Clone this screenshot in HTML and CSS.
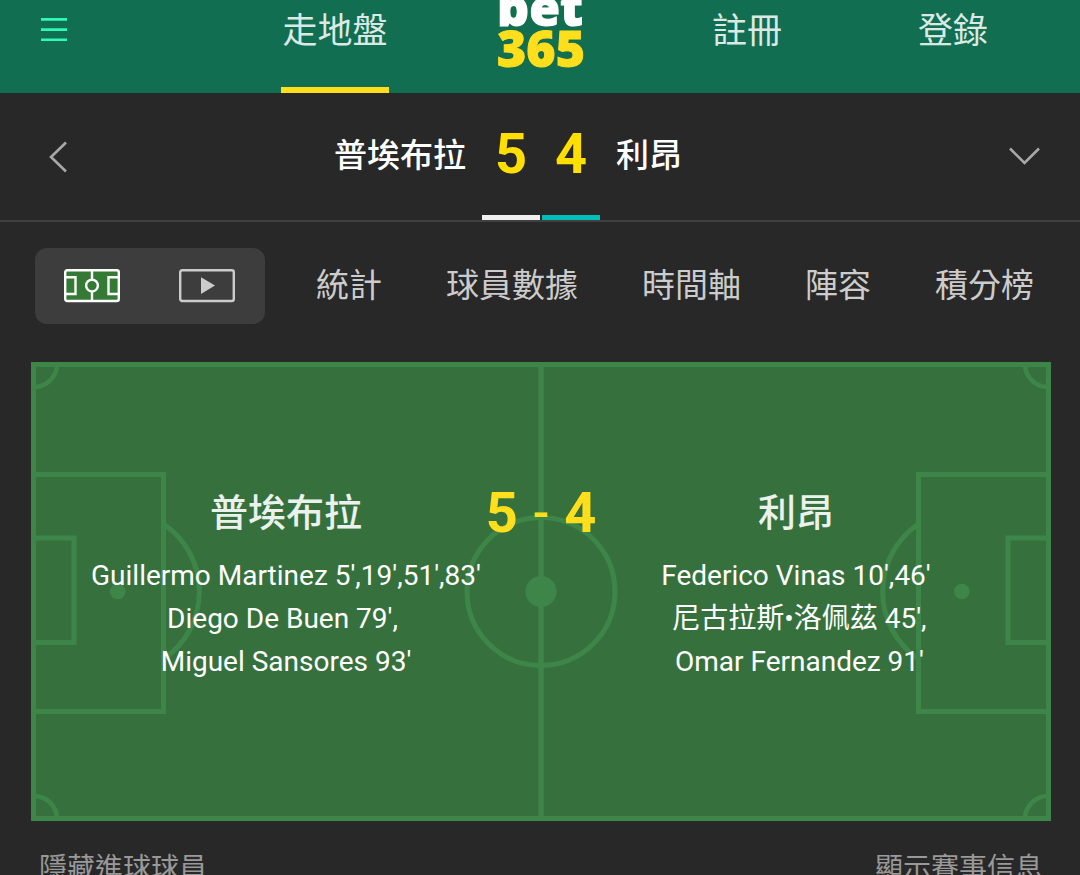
FILE: index.html
```html
<!DOCTYPE html>
<html lang="zh-Hant">
<head>
<meta charset="utf-8">
<meta name="viewport" content="width=device-width, initial-scale=1">
<title>bet365</title>
<link rel="stylesheet" href="styles.css">
</head>
<body>
<header class="top-bar">
  <button class="menu-button" type="button" aria-label="選單">
    <svg width="26" height="24" viewBox="0 0 26 24" aria-hidden="true"><path d="M0 1.4H26M0 11.6H26M0 21.7H26" stroke="#2ffab4" stroke-width="2.6"/></svg>
  </button>
  <a class="top-link top-link-active" href="#inplay">走地盤</a>
  <a class="logo" href="#home"><span class="logo-bet">bet</span><span class="logo-num">365</span></a>
  <a class="top-link" href="#join">註冊</a>
  <a class="top-link" href="#login">登錄</a>
</header>

<section class="match-bar">
  <button class="icon-button" type="button" aria-label="返回">
    <svg width="20" height="32" viewBox="0 0 20 32" aria-hidden="true"><path d="M18 1.5L3 16L18 30.5" fill="none" stroke="#a8a8a8" stroke-width="2.6"/></svg>
  </button>
  <div class="match-title">
    <span class="match-team match-team-home">普埃布拉</span>
    <span class="match-score match-score-home">5</span>
    <span class="match-score match-score-away">4</span>
    <span class="match-team">利昂</span>
  </div>
  <button class="icon-button icon-button-end" type="button" aria-label="更多賽事">
    <svg width="32" height="20" viewBox="0 0 32 20" aria-hidden="true"><path d="M1 1.5L15.500 16L30 1.5" fill="none" stroke="#a8a8a8" stroke-width="2.6"/></svg>
  </button>
</section>

<nav class="tabs">
  <div class="view-switch">
    <button class="view-button" type="button" aria-label="球場">
      <svg width="56" height="34" viewBox="0 0 56 34" aria-hidden="true">
        <rect x="1.200" y="1.200" width="53.600" height="30.800" rx="2" fill="#347a35" stroke="#fff" stroke-width="2.400"/>
        <path d="M28 2V11M28 23V32M2 8.200H11.500V25H2M54 8.200H44.500V25H54" fill="none" stroke="#fff" stroke-width="2.400"/>
        <circle cx="28" cy="16.600" r="5.900" fill="none" stroke="#fff" stroke-width="2.400"/>
      </svg>
    </button>
    <button class="view-button" type="button" aria-label="視頻">
      <svg width="56" height="34" viewBox="0 0 56 34" aria-hidden="true">
        <rect x="1.200" y="1.200" width="53.600" height="30.800" rx="2" fill="none" stroke="#ccc" stroke-width="2.400"/>
        <path d="M22 8.200L36 16.600L22 25Z" fill="#ccc"/>
      </svg>
    </button>
  </div>
  <div class="tab-list">
    <a class="tab" href="#stats">統計</a>
    <a class="tab" href="#players">球員數據</a>
    <a class="tab" href="#timeline">時間軸</a>
    <a class="tab" href="#lineup">陣容</a>
    <a class="tab" href="#table">積分榜</a>
  </div>
</nav>

<main class="pitch">
  <svg class="pitch-lines" viewBox="0 0 1020 459" aria-hidden="true">
    <g fill="none" stroke="#3e8549" stroke-width="5">
      <rect x="2.500" y="2.500" width="1015" height="454"/>
      <path d="M510 0V459" stroke-width="5.500"/>
      <circle cx="510" cy="229.500" r="74"/>
      <path d="M0 112.500H132.500V349.500H0M0 176H43V280.500H0"/>
      <path d="M134 163A81.500 81.500 0 0 1 134 296"/>
      <path d="M1020 112.500H887.500V349.500H1020M1020 176H977V280.500H1020"/>
      <path d="M886 163A81.500 81.500 0 0 0 886 296"/>
      <path d="M26 3A23 23 0 0 1 3 25M994 3A23 23 0 0 0 1017 25M3 434A23 23 0 0 1 26 456M1017 434A23 23 0 0 0 994 456" stroke-width="4.600"/>
    </g>
    <g fill="#3e8549">
      <circle cx="510" cy="229.500" r="15.500"/>
      <circle cx="86.700" cy="229.500" r="7.800"/>
      <circle cx="930.800" cy="229.500" r="7.800"/>
    </g>
  </svg>
  <div class="summary">
    <h2 class="summary-team summary-home">普埃布拉</h2>
    <h2 class="summary-team summary-away">利昂</h2>
    <p class="summary-score"><span>5</span><span class="summary-dash">-</span><span>4</span></p>
    <ul class="scorers">
      <li>Guillermo Martinez 5',19',51',83'</li>
      <li>Diego De Buen 79',&nbsp;</li>
      <li>Miguel Sansores 93'</li>
    </ul>
    <ul class="scorers">
      <li>Federico Vinas 10',46'</li>
      <li>&nbsp;尼古拉斯•洛佩茲 45',</li>
      <li>&nbsp;Omar Fernandez 91'</li>
    </ul>
  </div>
</main>

<footer class="pitch-actions">
  <button class="text-button" type="button">隱藏進球球員</button>
  <button class="text-button" type="button">顯示賽事信息</button>
</footer>
</body>
</html>
```
FILE: styles.css
```css
* {
  box-sizing: border-box;
}

body {
  height: 100vh;
  margin: 0;
  overflow: hidden;
  background: #282828;
  color: #fff;
  font-family: Roboto, "Noto Sans CJK TC", sans-serif;
}

button {
  padding: 0;
  border: 0;
  background: none;
  color: inherit;
  font: inherit;
}

a {
  color: inherit;
  text-decoration: none;
}

svg {
  display: block;
}

.top-bar {
  display: grid;
  grid-template-columns: repeat(5, 1fr);
  justify-items: center;
  height: 93px;
  padding: 0 24px 0 26px;
  overflow: hidden;
  background: #126e51;
}

.menu-button {
  justify-self: start;
  align-self: start;
  padding: 18px 15px;
}

.top-link {
  height: 93px;
  padding: 12px 1px 0;
  border-bottom: 6px solid transparent;
  color: #dbe9e4;
  font-size: 35px;
  line-height: 40px;
}

.top-link-active {
  border-color: #ffdf1b;
}

.logo {
  display: flex;
  flex-direction: column;
  margin-top: -13px;
  font-family: "Open Sans", "Noto Sans", sans-serif;
  font-size: 50px;
  font-weight: 800;
  line-height: 41px;
  -webkit-text-stroke: 1px currentColor;
}

.logo-num {
  color: #ffdf1b;
}

.match-bar {
  display: grid;
  grid-template-columns: 80px 1fr 80px;
  align-items: center;
  height: 129px;
  padding: 0 0 0 2px;
  border-bottom: 2px solid #404040;
}

.icon-button {
  display: flex;
  padding-left: 46px;
}

.icon-button-end {
  justify-content: flex-end;
  padding: 0 39px 0 0;
}

.match-title {
  display: grid;
  grid-template-columns: 1fr 58px 58px 1fr;
  column-gap: 2px;
  height: 127px;
  font-size: 33px;
  font-weight: 500;
  line-height: 122px;
}

.match-team {
  padding: 2px 14px 0;
}

.match-team-home {
  text-align: right;
}

.match-score {
  border-bottom: 5px solid #f0f0f0;
  color: #ffdf00;
  font-size: 56px;
  font-weight: 700;
  text-align: center;
}

.match-score-away {
  border-color: #00c0b5;
}

.tabs {
  display: flex;
  align-items: center;
  gap: 51px;
  padding: 26px 46px 38px 35px;
}

.view-switch {
  display: flex;
  flex: 0 0 230px;
  height: 76px;
  padding-right: 1px;
  border-radius: 12px;
  background: #3d3d3d;
}

.view-button {
  display: flex;
  flex: 1;
  align-items: center;
  justify-content: center;
}

.tab-list {
  display: flex;
  flex: 1;
  justify-content: space-between;
  color: #ccc;
  font-size: 33px;
  line-height: 40px;
  white-space: nowrap;
}

.pitch {
  display: grid;
  margin: 0 29px 0 31px;
  background: #36713d;
}

.pitch-lines {
  grid-area: 1 / 1;
  width: 100%;
}

.summary {
  display: grid;
  grid-area: 1 / 1;
  grid-template-columns: 1fr 1fr;
  align-content: start;
  align-items: center;
  padding-top: 120px;
  text-align: center;
}

.summary-team {
  grid-row: 1;
  margin: 0;
  color: #ebf1ec;
  font-size: 38px;
  font-weight: 500;
  line-height: 60px;
}

.summary-home {
  grid-column: 1;
}

.summary-away {
  grid-column: 2;
}

.summary-score {
  display: flex;
  grid-row: 1;
  grid-column: 1 / -1;
  justify-content: center;
  gap: 15px;
  margin: 0;
  color: #ffdf1b;
  font-size: 56px;
  font-weight: 700;
  line-height: 62px;
}

.summary-dash {
  font-size: 48px;
  font-weight: 500;
}

.scorers {
  margin: 0;
  padding: 10px 0 0;
  font-size: 28px;
  line-height: 43px;
  list-style: none;
}

.pitch-actions {
  display: flex;
  justify-content: space-between;
  padding: 28px 37px 0 39px;
  color: #999;
  font-size: 28px;
  line-height: 40px;
}
```
